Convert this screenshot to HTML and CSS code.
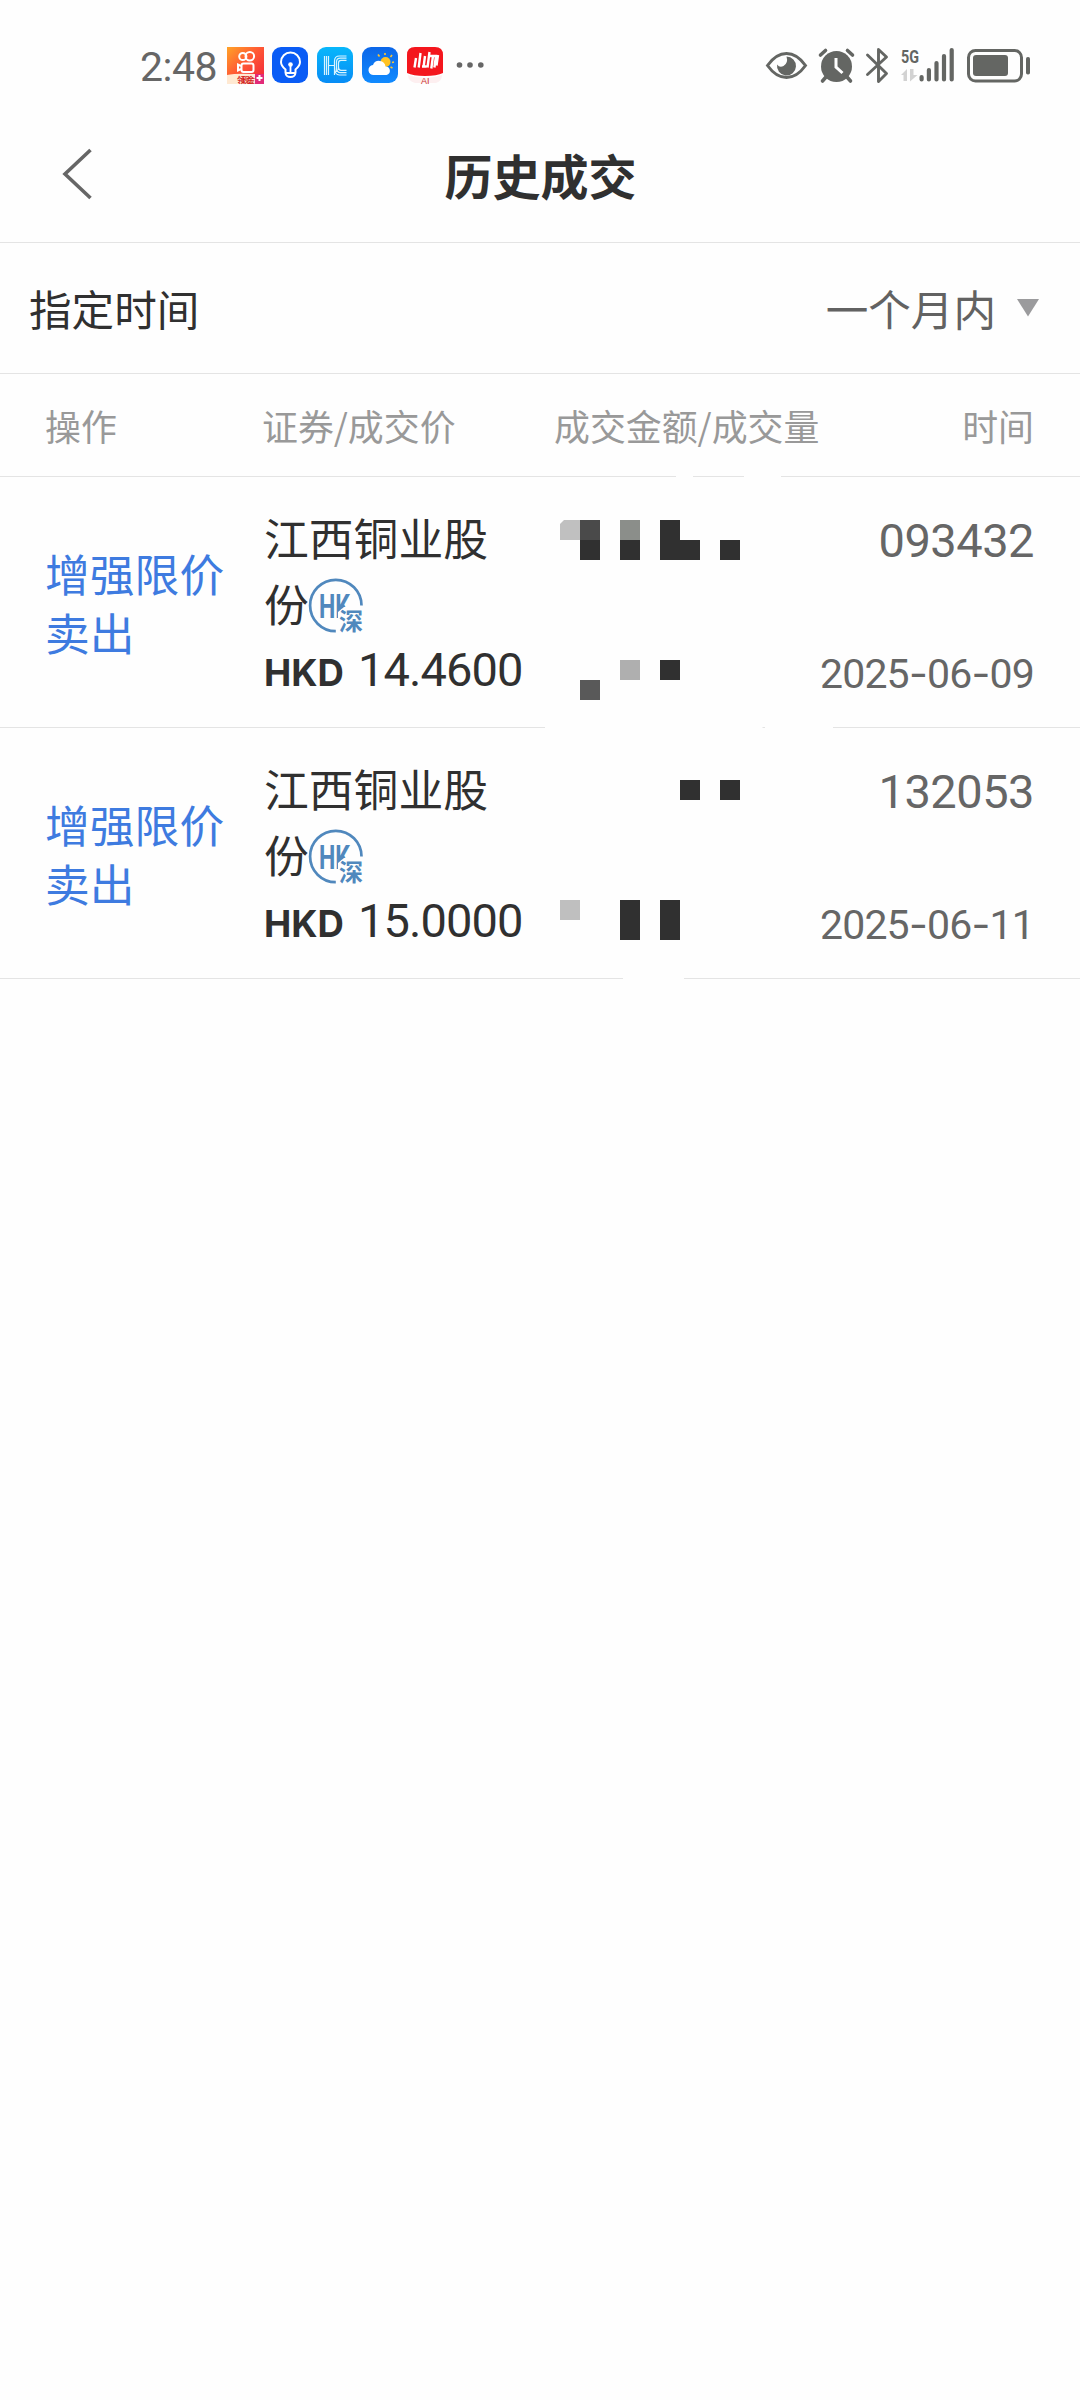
FILE: index.html
```html
<!DOCTYPE html>
<html lang="zh-CN">
<head>
<meta charset="utf-8">
<title>历史成交</title>
<link rel="stylesheet" href="styles.css">
</head>
<body>
<header class="status">
  <span class="clock">2:48</span>
  <div class="apps">
    <svg width="37" height="38" viewBox="0 0 37 38">
      <defs><linearGradient id="ks" x1="0" y1="0" x2="1" y2="1"><stop offset="0" stop-color="#ffa328"/><stop offset=".45" stop-color="#ff5a34"/><stop offset="1" stop-color="#f0203c"/></linearGradient></defs>
      <path d="M0 0H37V37H0Z" fill="url(#ks)"/>
      <g fill="none" stroke="#fff" stroke-width="2"><circle cx="15.8" cy="9.5" r="3.6"/><circle cx="22.8" cy="9.3" r="4.3"/><rect x="14.5" y="16.500" width="12" height="8.500" rx="2"/><path d="M14 19l-3-1.500v6l3-1.500"/></g>
      <path d="M0 28q9-2 28-1v10H0Z" fill="#ffe9d2"/><path d="M28 27h9v10h-9Z" fill="#e22a78"/><path d="M32.500 28v6M29.500 31h6" stroke="#fff" stroke-width="2"/>
      <text x="10" y="35.500" class="tiny-cn" textLength="18">领现金</text>
    </svg>
    <svg width="37" height="38" viewBox="0 0 37 38">
      <rect width="36" height="36" rx="9" fill="#0a5cf5"/>
      <path d="M13.500 25.500v-3C10.500 20 9 18 9 15a9.500 9.500 0 0 1 19 0c0 3-1.500 5-4.500 7.500v3c0 6-10 6-10 0Z" fill="none" stroke="#fff" stroke-width="2"/>
      <path d="M14 26h9M18.500 26v-8" stroke="#fff" stroke-width="1.800"/><circle cx="18.500" cy="17.500" r="2.300" fill="#fff"/>
    </svg>
    <svg width="37" height="38" viewBox="0 0 37 38">
      <defs><linearGradient id="hc" x1="0" y1="0" x2="0" y2="1"><stop offset="0" stop-color="#08b7fb"/><stop offset="1" stop-color="#078cf5"/></linearGradient></defs>
      <rect width="36" height="36" rx="9" fill="url(#hc)"/>
      <g fill="none" stroke="#d9f4ff" stroke-width="1.200"><path d="M7.500 9v19M9.500 9v19M11.500 9v19M12 18.500h5M17.500 28V14q0-5 5-5h7M19.500 25V15q0-3.800 4-3.800h6M21.500 23v-7q0-2.600 2.500-2.600h5.500M17.500 20q0 8 5 8h7M19.500 20q0 5.700 4 5.700h6M21.500 20q0 3.300 2.500 3.300h5.500"/></g>
    </svg>
    <svg width="37" height="38" viewBox="0 0 37 38">
      <defs><linearGradient id="we" x1="0" y1="0" x2="0" y2="1"><stop offset="0" stop-color="#0b66e8"/><stop offset="1" stop-color="#118bff"/></linearGradient></defs>
      <rect width="36" height="36" rx="9" fill="url(#we)"/>
      <g stroke="#ffc52e" stroke-width="1.600"><path d="M23 8V6M17.500 9.500L16 7.500M28.500 10l1.500-2M30 15.500l2-.5M28.500 20l2 1"/></g>
      <circle cx="23.500" cy="15" r="5" fill="#ffc325"/>
      <path d="M12 28a5 5 0 0 1-1-10 6.500 6.500 0 0 1 12.500 1.500A4.300 4.300 0 0 1 24.500 28Z" fill="#fff"/>
    </svg>
    <svg width="37" height="38" viewBox="0 0 37 38">
      <path d="M8 0H28Q36 0 36 8V26Q30 29 18 29T0 26V8Q0 0 8 0Z" fill="#f4161d"/>
      <path d="M1 28Q18 34 35 28Q35 34 29 36H8Q1 34 1 28Z" fill="#fdeff0"/>
      <path d="M9 11L7.500 20.500M13.500 6L11.700 20.500M18 9L16.500 20.500M15 19.500h4.500M22.500 5L20.500 20.500M22.500 9h6.500l-1.600 11.500M26 9l-1.700 12.500M31 8l-1.500 10.500" fill="none" stroke="#fff" stroke-width="2.400"/>
      <text x="14" y="36.500" class="tiny-ai">AI</text>
    </svg>
  </div>
  <svg class="dots" width="28" height="38" viewBox="457 46 28 38" fill="#666"><circle cx="460.500" cy="65" r="2.800"/><circle cx="471" cy="65" r="2.800"/><circle cx="481.800" cy="65" r="2.800"/></svg>
  <svg class="system" width="267" height="40" viewBox="765 46 267 40" fill="#646663">
    <path d="M767.500 65.500Q776 53.500 786.500 53.500T805.500 65.500Q797 77.500 786.500 77.500T767.500 65.500Z" fill="none" stroke="#646663" stroke-width="3"/>
    <path d="M786.500 56.500a9.500 9.500 0 1 1-9.400 8q2.500 3.500 6.400 1.500 5-3 3-9.500Z"/>
    <circle cx="836.500" cy="66.500" r="15.500"/>
    <path d="M820.500 55l5-4.500M852.500 55l-5-4.500M826 77l-3.500 4M847 77l3.500 4" fill="none" stroke="#646663" stroke-width="3.600" stroke-linecap="round"/>
    <path d="M836 58v9l6.500 6" fill="none" stroke="#fff" stroke-width="3"/>
    <path d="M867.500 55l19 18.500-8 8V49.500l8 7.500-19 17.500" fill="none" stroke="#646663" stroke-width="2.900" stroke-linejoin="round" stroke-linecap="round"/>
    <text x="901" y="62.500" class="net" textLength="18" lengthAdjust="spacingAndGlyphs">5G</text>
    <path d="M901 75l6-6v12h-3.500v-6ZM910 69h3.500v6h4l-7.500 6.500Z" fill="#d2d2d2"/>
    <path d="M921.600 77v2.500M928.900 70v9.500M936.500 63v16.500M944 56v23.500M951.700 50v29.500" stroke="#646663" stroke-width="4.200" stroke-linecap="round"/>
    <rect x="968.500" y="50.500" width="53" height="30.500" rx="7" fill="none" stroke="#646663" stroke-width="3"/>
    <rect x="973" y="55" width="35" height="21" rx="3"/><rect x="1026" y="57" width="4" height="17.500" rx="1.800"/>
  </svg>
</header>
<nav class="titlebar">
  <svg class="back" width="34" height="54" viewBox="60 148 34 54"><path d="M90.500 151L65 175l25.500 24" fill="none" stroke="#666" stroke-width="3.600"/></svg>
  <h1>历史成交</h1>
</nav>
<section class="filter">
  <span>指定时间</span>
  <span class="range">一个月内<svg width="22" height="18" viewBox="0 0 22 18"><path d="M0 0H22L11 17.500Z" fill="#9b9b9d"/></svg></span>
</section>
<main>
  <div class="columns head"><span>操作</span><span>证券/成交价</span><span>成交金额/成交量</span><span class="right">时间</span></div>
  <svg class="rule" width="1080" height="1" viewBox="0 0 1080 1"><path d="M0 .5H676M693 .5H744M781 .5H1080"/></svg>
  <article class="columns row">
    <div class="action">增强限价<br>卖出</div>
    <div class="stock">
      <div>江西铜业股</div>
      <div class="second">份<svg class="badge" width="56" height="56" viewBox="308 578 56 56"><path d="M361.500 605.500a25.700 25.700 0 1 0-25.700 25.700" fill="none" stroke="#5088bd" stroke-width="2.700"/><text x="319" y="617.500" class="hk" textLength="31" lengthAdjust="spacingAndGlyphs">HK</text><path d="M344 607h20v27h-26v-22Z" fill="#fefefe"/><text x="339" y="630" class="shen">深</text></svg></div>
      <div class="price"><b>HKD</b><span>14.4600</span></div>
    </div>
    <svg class="mosaic" width="200" height="200" viewBox="560 510 200 200" fill="#303030">
      <path d="M560 524l4-4h16v20h-20Z" fill="#c0c0c0"/><path d="M580 520h20v20h-20Z" fill="#4a4a4a"/><path d="M620 520h20v20h-20Z" fill="#8b8e8a"/>
      <path d="M580 540h20v20h-20ZM620 540h20v20h-20ZM660 520h20v20h20v20h-40ZM720 540h20v20h-20ZM660 660h20v20h-20Z"/>
      <path d="M620 660h20v20h-20Z" fill="#afafaf"/><path d="M580 680h20v20h-20Z" fill="#595959"/>
    </svg>
    <div class="when"><span class="time">093432</span><span class="date">2025<i>-</i>06<i>-</i>09</span></div>
  </article>
  <svg class="rule" width="1080" height="1" viewBox="0 0 1080 1"><path d="M0 .5H545M762.500 .5H765M833 .5H1080"/></svg>
  <article class="columns row">
    <div class="action">增强限价<br>卖出</div>
    <div class="stock">
      <div>江西铜业股</div>
      <div class="second">份<svg class="badge" width="56" height="56" viewBox="308 578 56 56"><path d="M361.500 605.500a25.700 25.700 0 1 0-25.700 25.700" fill="none" stroke="#5088bd" stroke-width="2.700"/><text x="319" y="617.500" class="hk" textLength="31" lengthAdjust="spacingAndGlyphs">HK</text><path d="M344 607h20v27h-26v-22Z" fill="#fefefe"/><text x="339" y="630" class="shen">深</text></svg></div>
      <div class="price"><b>HKD</b><span>15.0000</span></div>
    </div>
    <svg class="mosaic" width="200" height="200" viewBox="560 761 200 200" fill="#303030">
      <path d="M680 780h20v20h-20ZM720 780h20v20h-20ZM620 900h20v40h-20ZM660 900h20v40h-20Z"/><path d="M560 900h20v20h-20Z" fill="#bfbfbf"/>
    </svg>
    <div class="when"><span class="time">132053</span><span class="date">2025<i>-</i>06<i>-</i>11</span></div>
  </article>
  <svg class="rule" width="1080" height="1" viewBox="0 0 1080 1"><path d="M0 .5H623M684 .5H1080"/></svg>
</main>
</body>
</html>
```
FILE: styles.css
```css
* { box-sizing: border-box; }
body {
  margin: 0;
  width: 1080px;
  min-height: 2400px;
  background: #fefefe;
  color: #303030;
  font-family: "Noto Sans CJK SC", sans-serif;
}
svg { display: block; flex: none; overflow: visible; }
.status { display: flex; height: 112px; padding: 47px 48px 0 140px; color: #666; }
.clock { width: 87px; padding-top: 1px; font: 41px/38px Roboto, sans-serif; letter-spacing: -.5px; }
.apps { display: flex; gap: 8px; }
.dots { margin: -1px 0 0 12px; }
.system { margin: -1px 0 0 auto; }
.tiny-cn { font: bold 8px "Noto Sans CJK SC", sans-serif; fill: #d3231e; }
.tiny-ai { font: 9px "Liberation Sans", sans-serif; fill: #c33; }
.net { font: bold 19px Roboto, sans-serif; }
.titlebar { display: grid; grid-template-columns: 120px 1fr 120px; align-items: center; height: 131px; padding-bottom: 6px; border-bottom: 1px solid #e4e4e4; }
.back { margin-left: 60px; }
h1 { margin: 0; padding-left: 1px; font-size: 48px; line-height: 72px; font-weight: 700; text-align: center; }
.filter { display: flex; justify-content: space-between; align-items: center; height: 131px; padding: 0 41px 0 29px; border-bottom: 1px solid #e4e4e4; font-size: 42.6px; line-height: 64px; }
.range { display: flex; align-items: center; gap: 21px; color: #626262; }
.columns { display: grid; grid-template-columns: 217px 292px 226px 1fr; padding: 0 46px 0 45px; }
.head { height: 102px; padding-bottom: 1px; align-items: center; font-size: 35.9px; color: #999; white-space: nowrap; }
.right, .when { text-align: right; }
.rule { stroke: #e4e4e4; stroke-width: 1; fill: none; }
.row { height: 250px; }
.action { align-self: center; padding-bottom: 1px; color: #3e7be0; font-size: 44.8px; line-height: 59px; }
.stock { padding: 27px 0 0 2px; font-size: 44.8px; line-height: 66px; }
.second { display: flex; align-items: center; height: 66px; }
.badge { margin: 6px 0 0 -1px; }
.price { display: flex; align-items: baseline; height: 60px; padding-top: 4px; line-height: 60px; white-space: nowrap; }
.price b { width: 94px; font: bold 36.5px/60px Inter, sans-serif; }
.price span { font: 47px/60px Roboto, sans-serif; letter-spacing: -.9px; }
.mosaic { margin: 33px 0 0 6px; }
.hk { font: bold 34px Roboto, sans-serif; fill: #5088bd; }
.shen { font: bold 24px/1 "Noto Sans CJK SC", sans-serif; fill: #5088bd; }
.when { display: flex; flex-direction: column; justify-content: space-between; padding: 34px 0 23px; color: #666; }
.time { font: 47px/60px Roboto, sans-serif; letter-spacing: -.5px; }
.date { font: 41px/60px Roboto, sans-serif; letter-spacing: -.8px; white-space: nowrap; }
.date i { font-family: Inter, sans-serif; font-style: normal; }
```
